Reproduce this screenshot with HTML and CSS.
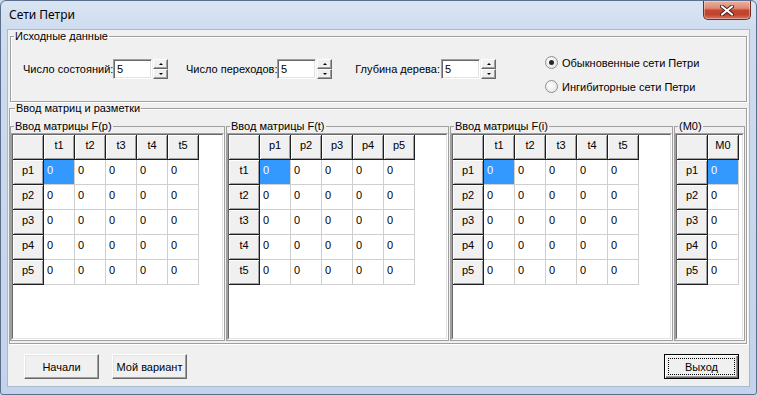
FILE: index.html
```html
<!DOCTYPE html>
<html lang="ru">
<head>
<meta charset="utf-8">
<title>Сети Петри</title>
<link rel="stylesheet" href="styles.css">
</head>
<body>
<div class="window">
  <div class="titlebar">
    <span class="title">Сети Петри</span>
    <div class="close">
      <svg width="14" height="11" viewBox="0 0 14 11">
        <path d="M2 1.5 L12 9.5 M12 1.5 L2 9.5" stroke="#4a1f1f" stroke-width="4" stroke-linecap="round" fill="none"/>
        <path d="M2 1.5 L12 9.5 M12 1.5 L2 9.5" stroke="#ffffff" stroke-width="2.2" stroke-linecap="round" fill="none"/>
      </svg>
    </div>
  </div>
  <div class="client">
    <fieldset class="group top-group">
      <legend>Исходные данные</legend>
      <div class="top-body">
        <div class="field f1">
          <span class="lbl">Число состояний:</span>
          <span class="edit">5</span>
          <span class="updown"><span class="ud"><i class="arr up"></i></span><span class="ud"><i class="arr down"></i></span></span>
        </div>
        <div class="field f2">
          <span class="lbl">Число переходов:</span>
          <span class="edit">5</span>
          <span class="updown"><span class="ud"><i class="arr up"></i></span><span class="ud"><i class="arr down"></i></span></span>
        </div>
        <div class="field f3">
          <span class="lbl">Глубина дерева:</span>
          <span class="edit">5</span>
          <span class="updown"><span class="ud"><i class="arr up"></i></span><span class="ud"><i class="arr down"></i></span></span>
        </div>
        <div class="radios">
          <div class="radio"><span class="circle checked"></span>Обыкновенные сети Петри</div>
          <div class="radio"><span class="circle"></span>Ингибиторные сети Петри</div>
        </div>
      </div>
    </fieldset>

    <fieldset class="group matrices">
      <legend>Ввод матриц и разметки</legend>
      <div class="subs">
        <fieldset class="group sub fp">
          <legend>Ввод матрицы F(p)</legend>
          <div class="grid"><div class="cells cols6">
            <span class="fx"></span><span class="fx">t1</span><span class="fx">t2</span><span class="fx">t3</span><span class="fx">t4</span><span class="fx">t5</span>
            <span class="fx">p1</span><span class="c sel">0</span><span class="c">0</span><span class="c">0</span><span class="c">0</span><span class="c">0</span>
            <span class="fx">p2</span><span class="c">0</span><span class="c">0</span><span class="c">0</span><span class="c">0</span><span class="c">0</span>
            <span class="fx">p3</span><span class="c">0</span><span class="c">0</span><span class="c">0</span><span class="c">0</span><span class="c">0</span>
            <span class="fx">p4</span><span class="c">0</span><span class="c">0</span><span class="c">0</span><span class="c">0</span><span class="c">0</span>
            <span class="fx">p5</span><span class="c">0</span><span class="c">0</span><span class="c">0</span><span class="c">0</span><span class="c">0</span>
          </div></div>
        </fieldset>
        <fieldset class="group sub ft">
          <legend>Ввод матрицы F(t)</legend>
          <div class="grid"><div class="cells cols6">
            <span class="fx"></span><span class="fx">p1</span><span class="fx">p2</span><span class="fx">p3</span><span class="fx">p4</span><span class="fx">p5</span>
            <span class="fx">t1</span><span class="c sel">0</span><span class="c">0</span><span class="c">0</span><span class="c">0</span><span class="c">0</span>
            <span class="fx">t2</span><span class="c">0</span><span class="c">0</span><span class="c">0</span><span class="c">0</span><span class="c">0</span>
            <span class="fx">t3</span><span class="c">0</span><span class="c">0</span><span class="c">0</span><span class="c">0</span><span class="c">0</span>
            <span class="fx">t4</span><span class="c">0</span><span class="c">0</span><span class="c">0</span><span class="c">0</span><span class="c">0</span>
            <span class="fx">t5</span><span class="c">0</span><span class="c">0</span><span class="c">0</span><span class="c">0</span><span class="c">0</span>
          </div></div>
        </fieldset>
        <fieldset class="group sub fi">
          <legend>Ввод матрицы F(i)</legend>
          <div class="grid"><div class="cells cols6">
            <span class="fx"></span><span class="fx">t1</span><span class="fx">t2</span><span class="fx">t3</span><span class="fx">t4</span><span class="fx">t5</span>
            <span class="fx">p1</span><span class="c sel">0</span><span class="c">0</span><span class="c">0</span><span class="c">0</span><span class="c">0</span>
            <span class="fx">p2</span><span class="c">0</span><span class="c">0</span><span class="c">0</span><span class="c">0</span><span class="c">0</span>
            <span class="fx">p3</span><span class="c">0</span><span class="c">0</span><span class="c">0</span><span class="c">0</span><span class="c">0</span>
            <span class="fx">p4</span><span class="c">0</span><span class="c">0</span><span class="c">0</span><span class="c">0</span><span class="c">0</span>
            <span class="fx">p5</span><span class="c">0</span><span class="c">0</span><span class="c">0</span><span class="c">0</span><span class="c">0</span>
          </div></div>
        </fieldset>
        <fieldset class="group sub fm">
          <legend>(M0)</legend>
          <div class="grid"><div class="cells cols2">
            <span class="fx"></span><span class="fx">M0</span>
            <span class="fx">p1</span><span class="c sel">0</span>
            <span class="fx">p2</span><span class="c">0</span>
            <span class="fx">p3</span><span class="c">0</span>
            <span class="fx">p4</span><span class="c">0</span>
            <span class="fx">p5</span><span class="c">0</span>
          </div></div>
        </fieldset>
      </div>
    </fieldset>

    <div class="buttons">
      <button class="btn">Начали</button>
      <button class="btn">Мой вариант</button>
      <button class="btn default"><span class="focus">Выход</span></button>
    </div>
  </div>
</div>
</body>
</html>
```

FILE: styles.css
```css
* { box-sizing: border-box; }
html, body { margin: 0; padding: 0; }
body {
  width: 757px;
  height: 395px;
  overflow: hidden;
  font-family: "Liberation Sans", Arial, sans-serif;
  font-size: 11px;
  color: #000;
  background: #c9d9ee;
}

.window {
  width: 757px;
  height: 395px;
  border: 1px solid #5b6f8c;
  border-radius: 6px 6px 3px 3px;
  background: linear-gradient(180deg, #dae5f3 0, #cddcef 29px, #c2d3eb 100%);
  display: flex;
  flex-direction: column;
  padding: 0 7px 8px 7px;
}

.titlebar {
  height: 29px;
  display: flex;
  align-items: flex-start;
}
.title {
  font-family: "Noto Sans", "Open Sans", sans-serif;
  font-size: 12px;
  line-height: 16px;
  margin-top: 6px;
  margin-left: 1px;
}
.close {
  margin-left: auto;
  margin-right: -2px;
  width: 48px;
  height: 19px;
  border: 1px solid #6e2c25;
  border-top: 0;
  border-radius: 0 0 5px 5px;
  background: linear-gradient(180deg, #eab0a0 0, #dc8a76 40%, #c7452f 52%, #c0432e 75%, #d7775f 100%);
  box-shadow: inset 0 0 0 1px rgba(255,255,255,0.35);
  display: flex;
  align-items: center;
  justify-content: center;
}

.client {
  flex: 1;
  background: #f0f0f0;
  box-shadow: 0 0 0 1px #a9b9cf;
  display: flex;
  flex-direction: column;
}

/* group boxes */
.group {
  margin: 0;
  padding: 0;
  min-width: 0;
  border: 1px solid #a0a0a0;
  box-shadow: 1px 1px 0 #fff, inset 1px 1px 0 #fff;
}
.group legend {
  padding: 0 1px;
  line-height: 13px;
  font-size: 11px;
}

.top-group {
  margin: 0 2px 0 2px;
  height: 72px;
}
.top-group legend { margin-left: 3px; }
.top-body {
  display: flex;
  height: 58px;
}
.field {
  display: flex;
  align-items: flex-start;
  padding-top: 16px;
}
.lbl {
  display: block;
  white-space: nowrap;
  text-align: right;
  line-height: 20px;
  margin-right: 1px;
}
.f1 { margin-left: 12px; }
.f1 .lbl { width: 89px; }
.f2 { margin-left: 18px; }
.f2 .lbl { width: 90px; }
.f3 { margin-left: 21px; }
.f3 .lbl { width: 87px; }

.edit {
  display: block;
  width: 39px;
  height: 20px;
  background: #fff;
  border-style: solid;
  border-width: 1px;
  border-color: #a0a0a0 #fff #fff #a0a0a0;
  box-shadow: inset 1px 1px 0 #696969, inset -1px -1px 0 #e3e3e3;
  padding-left: 3px;
  line-height: 18px;
}
.updown {
  display: flex;
  flex-direction: column;
  margin-left: 1px;
  width: 15px;
  height: 20px;
}
.ud {
  flex: 1;
  background: #f0f0f0;
  border-style: solid;
  border-width: 1px;
  border-color: #fff #696969 #696969 #fff;
  box-shadow: inset -1px -1px 0 #a0a0a0;
  display: flex;
  align-items: center;
  justify-content: center;
}
.arr {
  display: block;
  width: 0;
  height: 0;
  border-left: 2px solid transparent;
  border-right: 2px solid transparent;
}
.arr.up { border-bottom: 2px solid #000; }
.arr.down { border-top: 2px solid #000; }

.radios {
  margin-left: 49px;
  padding-top: 13px;
  display: flex;
  flex-direction: column;
  gap: 11px;
}
.radio {
  display: flex;
  align-items: center;
  height: 13px;
  white-space: nowrap;
}
.circle {
  width: 13px;
  height: 13px;
  border-radius: 50%;
  border: 1px solid #8f8f8f;
  background: radial-gradient(circle at 40% 40%, #ffffff 0, #e8e8e8 70%, #d8d8d8 100%);
  margin-right: 4px;
  display: flex;
  align-items: center;
  justify-content: center;
}
.circle.checked::after {
  content: "";
  width: 5px;
  height: 5px;
  border-radius: 50%;
  background: #262626;
}

/* matrices */
.matrices {
  margin: 0 2px 0 1px;
  height: 242px;
}
.matrices > legend { margin-left: 5px; }
.subs {
  display: flex;
  gap: 1px;
  margin-top: 5px;
  height: 221px;
}
.sub {
  display: flex;
  flex-direction: column;
  box-shadow: none;
}
.sub legend { margin-left: 3px; }
.fp { width: 215px; }
.ft { width: 223px; }
.fi { width: 223px; }
.fm { width: 71px; }

.grid {
  flex: 1;
  display: flex;
  border-style: solid;
  border-width: 1px;
  border-color: #a0a0a0 #fff #fff #a0a0a0;
}
.cells {
  flex: 1;
  background: #fff;
  border-style: solid;
  border-width: 1px;
  border-color: #696969 #e3e3e3 #e3e3e3 #696969;
  display: grid;
  grid-auto-rows: 25px;
  align-content: start;
}
.cols6 { grid-template-columns: repeat(6, 31px); }
.cols2 { grid-template-columns: repeat(2, 31px); }

.fx, .c {
  display: block;
  line-height: 13px;
  padding-top: 4px;
  white-space: nowrap;
}
.fx {
  background: #f0f0f0;
  border-right: 1px solid #1e1e1e;
  border-bottom: 1px solid #1e1e1e;
  box-shadow: inset 1px 1px 0 #fff, inset -1px -1px 0 #a0a0a0;
  text-align: center;
}
.c {
  border-right: 1px solid #cfcfcf;
  border-bottom: 1px solid #cfcfcf;
  padding-left: 3px;
}
.c.sel {
  background: #3399ff;
  color: #fff;
}

/* buttons */
.buttons {
  flex: 1;
  display: flex;
  align-items: flex-start;
  padding: 10px 10px 0 16px;
}
.btn {
  width: 75px;
  height: 25px;
  font-family: "Liberation Sans", Arial, sans-serif;
  font-size: 11px;
  color: #000;
  background: #f0f0f0;
  border-style: solid;
  border-width: 1px;
  border-color: #fff #696969 #696969 #fff;
  box-shadow: inset -1px -1px 0 #a0a0a0, inset 1px 1px 0 #e3e3e3;
  padding: 0;
  margin: 0 13px 0 0;
}
.btn.default {
  margin: 0 0 0 auto;
  border: 1px solid #000;
  box-shadow: inset 1px 1px 0 #fff, inset -1px -1px 0 #696969, inset -2px -2px 0 #a0a0a0;
  padding: 3px;
  display: flex;
}
.focus {
  flex: 1;
  display: flex;
  align-items: center;
  justify-content: center;
  border: 1px dotted #000;
}
```
